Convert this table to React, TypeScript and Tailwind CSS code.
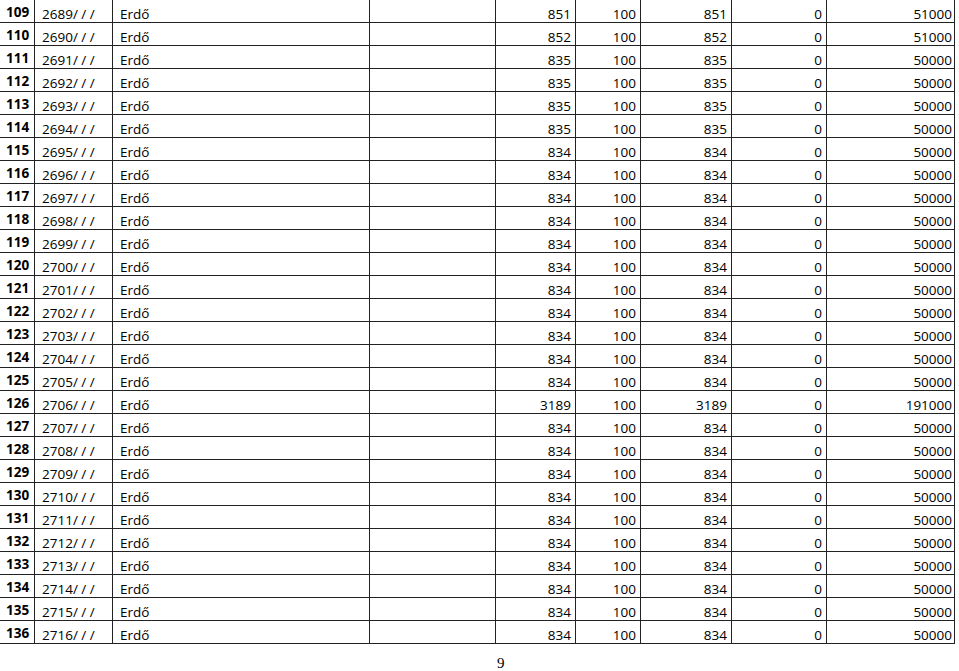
const rows = Array.from({ length: 28 }, (_, i) => {
  const n = 109 + i;
  let area = 834;
  let value = 50000;
  if (n === 109) { area = 851; value = 51000; }
  else if (n === 110) { area = 852; value = 51000; }
  else if (n >= 111 && n <= 114) area = 835;
  else if (n === 126) { area = 3189; value = 191000; }
  return { n, plot: `${2580 + n}/ / /`, area, value };
});

const cell = "border-r border-[#222] flex items-end leading-[16px]";

export default function App() {
  return (
    <div className="w-[959px] h-[671px] bg-white text-black" style={{ fontFamily: '"Open Sans", sans-serif' }}>
      <div className="w-[955px] text-[13.5px]">
        {rows.map((r) => (
          <div
            key={r.n}
            className="grid grid-cols-[35px_78px_257px_126px_80px_65px_91px_95px_128px] h-[23px] border-b border-[#222]"
          >
            <div className={`${cell} pl-[6px] pb-[2px] font-bold`}>{r.n}</div>
            <div className={`${cell} pl-[7px]`}>{r.plot}</div>
            <div className={`${cell} pl-[7px]`}>Erdő</div>
            <div className={cell}></div>
            <div className={`${cell} justify-end pr-[4px]`}>{r.area}</div>
            <div className={`${cell} justify-end pr-[4px]`}>100</div>
            <div className={`${cell} justify-end pr-[4px]`}>{r.area}</div>
            <div className={`${cell} justify-end pr-[4px]`}>0</div>
            <div className={`${cell} justify-end pr-[2px]`}>{r.value}</div>
          </div>
        ))}
      </div>
      <div className="pt-[10px] pl-[497px] text-[15px] leading-[18px]" style={{ fontFamily: '"Liberation Serif", serif' }}>
        9
      </div>
    </div>
  );
}
